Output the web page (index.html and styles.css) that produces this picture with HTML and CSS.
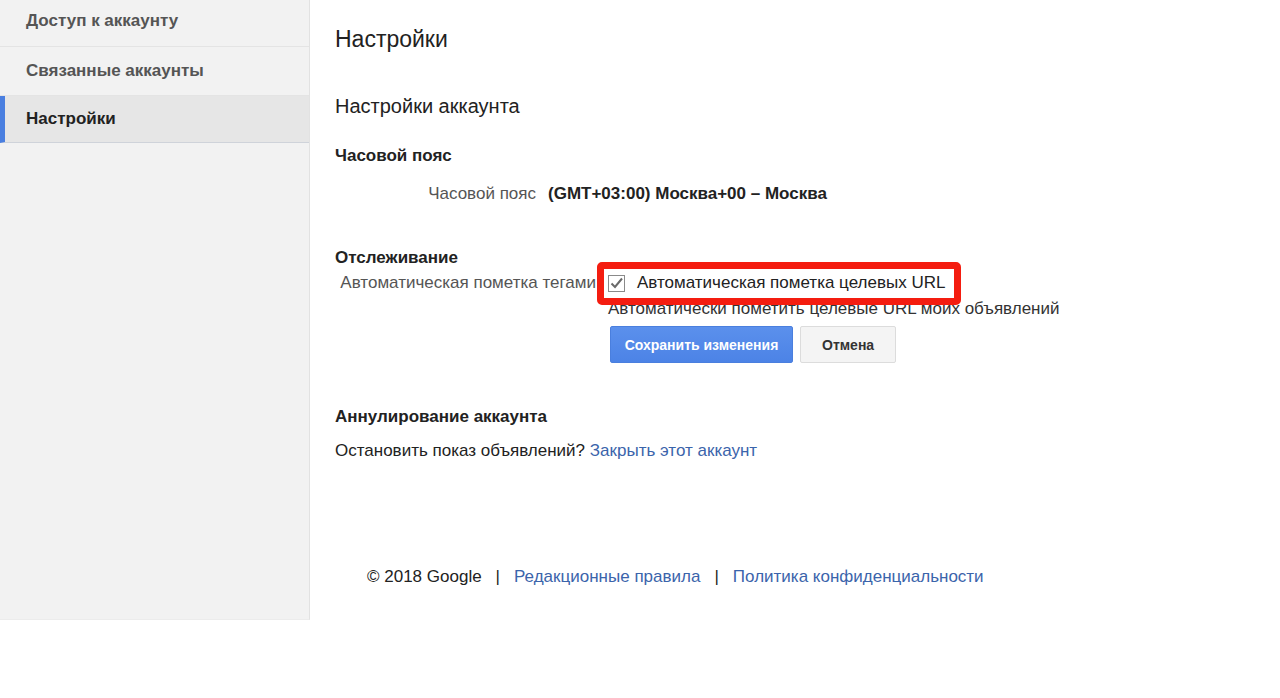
FILE: index.html
```html
<!DOCTYPE html>
<html lang="ru">
<head>
<meta charset="utf-8">
<title>Настройки</title>
<link rel="stylesheet" href="styles.css">
</head>
<body>
<div class="page">
  <nav class="sidebar">
    <a class="nav-item first">Доступ к аккаунту</a>
    <a class="nav-item">Связанные аккаунты</a>
    <a class="nav-item active">Настройки</a>
  </nav>
  <main class="main">
    <h1 class="title">Настройки</h1>
    <h2 class="subtitle">Настройки аккаунта</h2>

    <h3 class="section">Часовой пояс</h3>
    <div class="tz-row">
      <span class="tz-label">Часовой пояс</span>
      <span class="tz-value">(GMT+03:00) Москва+00 – Москва</span>
    </div>

    <h3 class="section tracking-head">Отслеживание</h3>
    <div class="track-row">
      <span class="track-label">Автоматическая пометка тегами</span>
      <div class="track-control">
        <label class="check-line">
          <svg class="checkbox" width="17" height="17" viewBox="0 0 17 17">
            <rect x="0.5" y="0.5" width="16" height="16" fill="#fff" stroke="#8a8a8a"/>
            <path d="M3.5 8.5 L7 12 L14 3.5" fill="none" stroke="#6a6a6a" stroke-width="2"/>
          </svg>
          <span>Автоматическая пометка целевых URL</span>
        </label>
        <div class="desc">Автоматически пометить целевые URL моих объявлений</div>
        <div class="buttons">
          <button class="btn primary">Сохранить изменения</button>
          <button class="btn">Отмена</button>
        </div>
      </div>
    </div>

    <h3 class="section cancel-head">Аннулирование аккаунта</h3>
    <p class="cancel-text">Остановить показ объявлений? <a class="link">Закрыть этот аккаунт</a></p>

    <footer class="footer">
      <span>© 2018 Google</span>
      <span class="sep">|</span>
      <a class="link">Редакционные правила</a>
      <span class="sep">|</span>
      <a class="link">Политика конфиденциальности</a>
    </footer>
  </main>
</div>
</body>
</html>
```

FILE: styles.css
```css
* { box-sizing: border-box; }
html, body { margin: 0; padding: 0; background: #fff; }
body {
  font-family: "Liberation Sans", Arial, sans-serif;
  color: #222;
  font-size: 17px;
}
.page {
  display: flex;
  align-items: flex-start;
}
.sidebar {
  width: 310px;
  height: 620px;
  flex: none;
  background: #f2f2f2;
  border-right: 1px solid #e2e2e2;
  border-bottom: 1px solid #ececec;
  display: flex;
  flex-direction: column;
}
.nav-item {
  display: flex;
  align-items: center;
  height: 49px;
  padding-left: 26px;
  font-weight: bold;
  font-size: 17px;
  color: #555;
  border-bottom: 1px solid #e4e4e4;
}
.nav-item.first {
  height: 47px;
  padding-bottom: 4px;
}
.nav-item.active {
  color: #222;
  background: #e6e6e6;
  border-left: 5px solid #4a7fe0;
  padding-left: 21px;
  border-bottom: 1px solid #cfd3da;
  height: 47px;
}
.main {
  flex: 1;
  padding-left: 25px;
}
.title {
  margin: 25px 0 0;
  font-size: 23px;
  line-height: 28px;
  font-weight: normal;
  color: #222;
}
.subtitle {
  margin: 41px 0 0;
  font-size: 20px;
  line-height: 24px;
  font-weight: normal;
  color: #222;
}
.section {
  margin: 28px 0 0;
  font-size: 17px;
  line-height: 20px;
  font-weight: bold;
  color: #222;
}
.tz-row {
  display: flex;
  gap: 12px;
  margin-top: 18px;
  line-height: 20px;
}
.tz-label {
  width: 201px;
  text-align: right;
  color: #555;
}
.tz-value {
  font-weight: bold;
  color: #222;
}
.tracking-head { margin-top: 44px; }
.track-row {
  display: flex;
  gap: 12px;
  margin-top: 5px;
}
.track-label {
  width: 261px;
  text-align: right;
  color: #555;
  line-height: 20px;
}
.track-control {
  display: flex;
  flex-direction: column;
}
.check-line {
  position: relative;
  z-index: 0;
  display: flex;
  align-items: center;
  gap: 12px;
  height: 20px;
  width: 340px;
  color: #222;
}
.check-line::before {
  content: "";
  position: absolute;
  left: -11px;
  right: -13px;
  top: -11px;
  bottom: -12px;
  border: 7px solid #f41d10;
  border-radius: 5px;
  z-index: -1;
  background: #fff;
}
.checkbox { flex: none; margin-top: 1px; }
.desc {
  margin-top: 6px;
  line-height: 20px;
  color: #333;
}
.buttons {
  display: flex;
  gap: 7px;
  margin-top: 7px;
  margin-left: 2px;
}
.btn {
  height: 37px;
  padding: 0 21px;
  font-family: "Liberation Sans", Arial, sans-serif;
  font-size: 14px;
  font-weight: bold;
  border-radius: 2px;
  border: 1px solid #dcdcdc;
  background: #f4f4f4;
  color: #333;
}
.btn.primary {
  background: linear-gradient(#5b90ec, #4c83e6);
  border-color: #4a7fde;
  color: #fff;
  padding: 0 12px;
  width: 183px;
}
.cancel-head { margin-top: 44px; }
.cancel-text {
  margin: 14px 0 0;
  line-height: 20px;
}
.link {
  color: #3b64ab;
  text-decoration: none;
}
.footer {
  margin-top: 106px;
  padding-left: 32px;
  line-height: 20px;
  display: flex;
}
.sep {
  margin: 0 14px;
  color: #222;
}
```
